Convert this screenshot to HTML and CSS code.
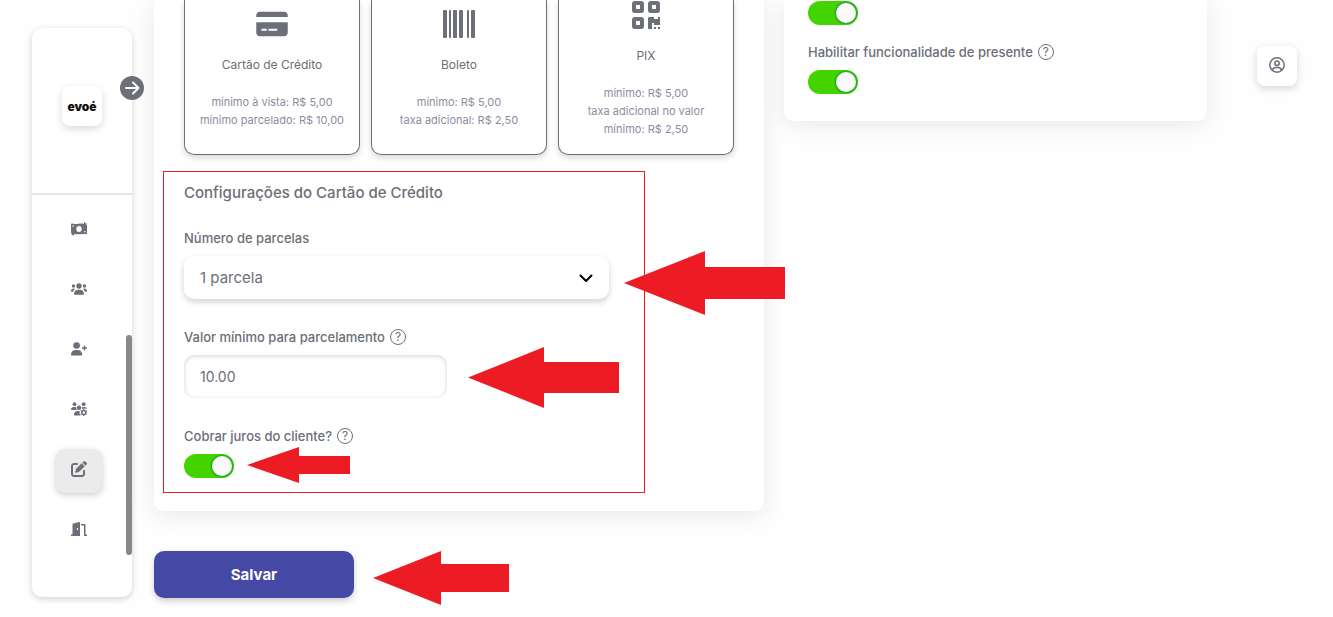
FILE: index.html
```html
<!DOCTYPE html>
<html lang="pt-BR">
<head>
  <meta charset="UTF-8">
  <meta name="viewport" content="width=device-width, initial-scale=1">
  <title>evoé - Configurações</title>
  <link rel="stylesheet" href="styles.css">
</head>
<body>
  <aside class="sidebar">
    <div class="sidebar-top">
      <a class="logo" href="#">evoé</a>
    </div>
    <button class="sidebar-toggle" type="button" aria-label="Expandir menu">
      <svg width="24" height="24" viewBox="0 0 24 24" fill="none" stroke="#fff" stroke-width="2" stroke-linecap="round" stroke-linejoin="round"><path d="M6 12h12M13 6.500l5.500 5.500-5.500 5.500"/></svg>
    </button>
    <nav class="menu">
      <a class="menu-item" href="#" aria-label="Financeiro">
        <svg width="16" height="14" viewBox="0 0 16 14" fill="currentColor">
          <path fill-rule="evenodd" d="M1.500 1.500C4 3 8 1.300 11.500 1.500L16 3V11c0 .8-.6 1.300-1.500 1.200C11 11.500 8 12.500 4.500 12.300L0 11V2.500C0 1.700.7 1.200 1.500 1.500zM8 4a2.700 3 0 1 0 0 6 2.700 3 0 0 0 0-6zM1.500 3.500v1.300c.9 0 1.500-.5 1.500-1.300zM14.500 10.300V9c-.9 0-1.500.5-1.500 1.300z"/>
          <path d="M13 0l3 2-3 2zM3 10l-3 2 3 2z"/>
        </svg>
      </a>
      <a class="menu-item" href="#" aria-label="Usuários">
        <svg width="16" height="12" viewBox="0 0 16 12" fill="currentColor">
          <circle cx="8" cy="3" r="2.700"/><circle cx="2.500" cy="3" r="1.700"/><circle cx="13.500" cy="3" r="1.700"/>
          <path d="M3 11c0-2.600 1.700-4.300 4-4.300h2c2.300 0 4 1.700 4 4.300 0 .5-.3.800-.8.800H3.800c-.5 0-.8-.3-.8-.8zM0 8.200C0 6.500 1 5.500 2.500 5.500c.7 0 1.300.2 1.700.5C3 6.700 2.300 7.700 2.200 8.700H.5c-.3 0-.5-.2-.5-.5zM16 8.200c0-1.700-1-2.700-2.500-2.700-.7 0-1.300.2-1.700.5 1.200.7 1.900 1.700 2 2.700h1.700c.3 0 .5-.2.500-.5z"/>
        </svg>
      </a>
      <a class="menu-item" href="#" aria-label="Adicionar usuário">
        <svg width="16" height="14" viewBox="0 0 16 14" fill="currentColor">
          <circle cx="5.600" cy="3.500" r="3.300"/>
          <path d="M0 12.700C0 9.800 1.900 8 4.500 8h2.200c2.600 0 4.500 1.800 4.500 4.700 0 .5-.3.900-.8.900H.8c-.5 0-.8-.4-.8-.9zM12.800 3.500h1.400v1.800H16v1.400h-1.800v1.800h-1.400V6.700H11V5.300h1.800z"/>
        </svg>
      </a>
      <a class="menu-item" href="#" aria-label="Gerenciar equipe">
        <svg width="16" height="14" viewBox="0 0 16 14" fill="currentColor">
          <circle cx="3.500" cy="2.200" r="1.900"/><circle cx="12.700" cy="2.200" r="1.900"/><circle cx="8" cy="5.700" r="2.200"/>
          <path d="M0 7.500C0 5.900 1.100 5 2.500 5h1.200c.6 0 1.100.1 1.500.4C5 6.300 5.300 7.200 6 8H.5c-.3 0-.5-.2-.5-.5zM10.900 5.300c.4-.2.900-.3 1.400-.3h1.200C15 5 16 5.800 16 7l-2-.6-3 .6c.1-.6.100-1.200-.1-1.700zM3 12.800C3 10.400 4.600 9 6.700 9h2c-.4 1.700-.1 3.500 1.100 4.500H3.600c-.3 0-.6-.3-.6-.7z"/>
          <circle cx="12.800" cy="10.500" r="2" fill="none" stroke="currentColor" stroke-width="1.500"/>
          <path d="M12.200 7h1.200v1.500h-1.200zM12.200 12.500h1.200V14h-1.200zM9.400 9.100l.6-1 1.300.8-.6 1zM14.900 12.100l.6-1 1.200.8-.6 1zM9.400 12l1.300-.8.6 1L10 13zM14.900 9l1.300-.8.6 1-1.300.8z"/>
        </svg>
      </a>
      <a class="menu-item active" href="#" aria-label="Editar evento">
        <svg width="16" height="16" viewBox="0 0 512 512" fill="currentColor">
          <path d="M472 22c-23-23-60-23-83 0l-28 28 101 101 28-28c23-23 23-60 0-83zM340 71L180 231c-7 7-12 15-14 24l-30 88c-3 9-1 18 6 25s16 9 25 6l88-30c9-3 17-8 24-14l160-160z"/>
          <path d="M96 64C43 64 0 107 0 160v256c0 53 43 96 96 96h256c53 0 96-43 96-96v-96c0-18-14-32-32-32s-32 14-32 32v96c0 18-14 32-32 32H96c-18 0-32-14-32-32V160c0-18 14-32 32-32h96c18 0 32-14 32-32s-14-32-32-32z"/>
        </svg>
      </a>
      <a class="menu-item" href="#" aria-label="Sair">
        <svg width="16" height="14" viewBox="0 0 16 14" fill="currentColor">
          <path fill-rule="evenodd" d="M8 0c.6 0 1 .4 1 1v13H0v-1.500h1.500V2.500c0-.5.300-.9.800-1zM6.500 6c-.4 0-.7.500-.7 1s.3 1 .7 1 .7-.5.700-1-.3-1-.7-1z"/>
          <path d="M10 2h3.500c.6 0 1 .4 1 1v9.500H16V14h-3V3.500h-3z"/>
        </svg>
      </a>
    </nav>
    <div class="scroll-thumb"></div>
  </aside>

  <main class="content">
    <form class="columns">
      <div class="column">
        <section class="card payment-card">
          <div class="methods">
            <div class="method">
              <span class="method-icon">
                <svg width="32" height="28" viewBox="0 0 576 512" fill="currentColor"><path d="M64 32C28.700 32 0 60.700 0 96v32h576V96c0-35.300-28.700-64-64-64H64zM576 224H0v192c0 35.300 28.700 64 64 64h448c35.300 0 64-28.700 64-64V224zM96 342h96v36H96zM224 342h160v36H224z"/></svg>
              </span>
              <h3>Cartão de Crédito</h3>
              <p>mínimo à vista: R$ 5,00<br>mínimo parcelado: R$ 10,00</p>
            </div>
            <div class="method">
              <span class="method-icon">
                <svg width="32" height="28" viewBox="0 0 32 28" fill="currentColor"><rect width="4" height="28" rx="1"/><rect x="6" width="2" height="28" rx="1"/><rect x="10" width="4" height="28" rx="1"/><rect x="16" width="4" height="28" rx="1"/><rect x="24" width="2" height="28" rx="1"/><rect x="28" width="4" height="28" rx="1"/></svg>
              </span>
              <h3>Boleto</h3>
              <p>mínimo: R$ 5,00<br>taxa adicional: R$ 2,50</p>
            </div>
            <div class="method">
              <span class="method-icon">
                <svg width="28" height="28" viewBox="0 0 28 28" fill="currentColor">
                  <path fill-rule="evenodd" d="M3 0h6a3 3 0 0 1 3 3v6a3 3 0 0 1-3 3H3a3 3 0 0 1-3-3V3a3 3 0 0 1 3-3zm1 4v4h4V4zM19 0h6a3 3 0 0 1 3 3v6a3 3 0 0 1-3 3h-6a3 3 0 0 1-3-3V3a3 3 0 0 1 3-3zm1 4v4h4V4zM3 16h6a3 3 0 0 1 3 3v6a3 3 0 0 1-3 3H3a3 3 0 0 1-3-3v-6a3 3 0 0 1 3-3zm1 4v4h4v-4z"/>
                  <path d="M17 16h5v2h4v-2h2v8h-6v-2h-2v6h-4V17zM22 26h2v2h-2zM26 26h2v2h-2z"/>
                </svg>
              </span>
              <h3>PIX</h3>
              <p>mínimo: R$ 5,00<br>taxa adicional no valor<br>mínimo: R$ 2,50</p>
            </div>
          </div>

          <div class="credit-settings">
            <h2>Configurações do Cartão de Crédito</h2>
            <div class="field">
              <label for="parcelas">Número de parcelas</label>
              <div class="control">
                <select id="parcelas" name="parcelas">
                  <option selected>1 parcela</option>
                  <option>2 parcelas</option>
                  <option>3 parcelas</option>
                </select>
                <svg class="chevron" width="14" height="9" viewBox="0 0 14 9" fill="none" stroke="#000" stroke-width="2" stroke-linecap="round" stroke-linejoin="round"><path d="M1.500 1.500L7 7l5.500-5.500"/></svg>
                <svg class="arrow arrow-select" width="161" height="64" viewBox="0 0 161 64"><path d="M0 32L81 0v16h80v32H81v16z"/></svg>
              </div>
            </div>
            <div class="field">
              <div class="label-row">
                <label for="minimo">Valor mínimo para parcelamento</label>
                <span class="help">?</span>
              </div>
              <div class="control control-short">
                <input class="text-input" type="text" id="minimo" name="minimo" value="10.00">
                <svg class="arrow arrow-input" width="151" height="61" viewBox="0 0 151 61"><path d="M0 30.500L76 0v15h75v31H76v15z"/></svg>
              </div>
            </div>
            <div class="field">
              <div class="label-row">
                <label for="juros">Cobrar juros do cliente?</label>
                <span class="help">?</span>
              </div>
              <div class="control control-switch">
                <input class="switch" type="checkbox" id="juros" name="juros" checked>
                <svg class="arrow arrow-switch" width="103" height="36" viewBox="0 0 103 36"><path d="M0 18L52 0v9h51v18H52v9z"/></svg>
              </div>
            </div>
          </div>
        </section>

        <div class="control control-save">
          <button class="save" type="submit">Salvar</button>
          <svg class="arrow arrow-save" width="136" height="54" viewBox="0 0 136 54"><path d="M0 27L68 0v13h68v28H68v13z"/></svg>
        </div>
      </div>

      <section class="card options-card">
        <input class="switch" type="checkbox" name="opcao" aria-label="Opção" checked>
        <div class="field">
          <div class="label-row">
            <label for="presente">Habilitar funcionalidade de presente</label>
            <span class="help">?</span>
          </div>
          <input class="switch" type="checkbox" id="presente" name="presente" checked>
        </div>
      </section>
    </form>
  </main>

  <button class="profile" type="button" aria-label="Perfil">
    <svg width="16" height="16" viewBox="0 0 16 16" fill="none" stroke="currentColor" stroke-width="1.500"><circle cx="8" cy="8" r="7.200"/><circle cx="8" cy="6.200" r="2.200"/><path d="M3.500 13.200c.5-2 1.900-2.700 3.500-2.700h2c1.600 0 3 .7 3.500 2.700"/></svg>
  </button>
</body>
</html>
```
FILE: styles.css
```css
* {
  box-sizing: border-box;
}

body {
  display: flex;
  align-items: flex-start;
  min-height: 100vh;
  margin: 0;
  padding: 0 36px 0 32px;
  background-color: #fefefe;
  color: #6c6e78;
  font-family: Inter, "Liberation Sans", sans-serif;
  font-size: 13px;
}

h2, h3, p {
  margin: 0;
}

button, input, select {
  margin: 0;
  border: none;
  font-family: inherit;
  color: inherit;
}

button {
  padding: 0;
  cursor: pointer;
}

/* sidebar */
.sidebar {
  position: relative;
  flex: none;
  width: 100px;
  height: calc(100vh - 48px);
  margin-top: 28px;
  border-radius: 10px;
  background-color: #fff;
  box-shadow: 0 2px 6px rgba(0, 0, 0, 0.18);
}

.sidebar-top {
  display: flex;
  justify-content: center;
  padding: 58px 0 67px;
  border-bottom: 2px solid #e5e5e5;
}

.logo {
  display: flex;
  align-items: center;
  justify-content: center;
  width: 40px;
  height: 40px;
  border-radius: 8px;
  box-shadow: 0 3px 8px rgba(0, 0, 0, 0.15);
  color: #111;
  font-size: 12px;
  font-weight: 900;
  text-decoration: none;
}

.sidebar-toggle {
  position: absolute;
  top: 48px;
  right: -12px;
  width: 24px;
  height: 24px;
  border-radius: 50%;
  background-color: #6c6e78;
}

.menu {
  display: flex;
  flex-direction: column;
  align-items: center;
  gap: 16px;
  padding: 12px 6px 0 0;
}

.menu-item {
  display: flex;
  align-items: center;
  justify-content: center;
  width: 46px;
  height: 44px;
  border-radius: 10px;
  color: #6c6e78;
}

.menu-item.active {
  height: 48px;
  margin-bottom: -4px;
  padding-bottom: 4px;
  border-top: 2px solid transparent;
  border-bottom: 2px solid transparent;
  background-color: #ebebeb;
  background-clip: padding-box;
  filter: drop-shadow(0 2px 3px rgba(0, 0, 0, 0.2));
}

.scroll-thumb {
  position: absolute;
  right: 0;
  bottom: 42px;
  width: 6px;
  height: 220px;
  border-radius: 3px;
  background-color: #888;
}

/* content */
.content {
  flex: 1;
  margin: 0 50px 0 22px;
}

.columns {
  display: grid;
  grid-template-columns: 610fr 423fr;
  align-items: start;
  gap: 20px;
}

.card {
  border-radius: 0 0 10px 10px;
  background-color: #fff;
  box-shadow: 0 4px 24px rgba(0, 0, 0, 0.09);
}

.payment-card {
  padding: 0 30px 18px 9px;
}

.options-card {
  padding: 1px 24px 27px;
}

.options-card .field {
  margin-top: 15px;
}

.methods {
  display: grid;
  grid-template-columns: repeat(3, 1fr);
  gap: 11px;
  margin-left: 21px;
}

.method {
  display: flex;
  flex-direction: column;
  align-items: center;
  justify-content: center;
  height: 155px;
  padding-bottom: 20px;
  border: 1px solid #6c6e78;
  border-top: none;
  border-radius: 0 0 10px 10px;
  box-shadow: 0 3px 6px rgba(0, 0, 0, 0.15);
  text-align: center;
  line-height: 18px;
  white-space: nowrap;
}

.method-icon {
  display: flex;
  flex: none;
  align-items: center;
  height: 36px;
  margin-bottom: 14px;
}

.method h3 {
  margin-bottom: 19px;
  font-size: 12px;
  font-weight: 400;
}

.method p {
  color: #8c8c9e;
  font-size: 11px;
}

.credit-settings {
  max-width: 482px;
  margin-top: 16px;
  padding: 11px 35px 14px 20px;
  border: 1px solid #ed1c24;
}

.credit-settings h2 {
  margin-bottom: 23px;
  font-size: 15px;
  font-weight: 500;
  line-height: 20px;
}

.field + .field {
  margin-top: 26px;
}

.field label {
  display: block;
  font-weight: 500;
  line-height: 24px;
}

.label-row {
  display: flex;
  align-items: center;
  gap: 5px;
}

.help {
  width: 16px;
  height: 16px;
  border: 1px solid #6c6e78;
  border-radius: 50%;
  font-size: 12px;
  line-height: 14px;
  text-align: center;
}

.control {
  position: relative;
  margin-top: 6px;
}

.control-short {
  max-width: 263px;
}

.control-switch {
  width: 50px;
}

.control-save {
  width: 200px;
  margin-top: 40px;
}

select, .text-input {
  display: block;
  width: 100%;
  height: 43px;
  padding: 0 16px;
  border-radius: 10px;
  background-color: #fff;
}

select {
  appearance: none;
  box-shadow: 0 3px 6px rgba(0, 0, 0, 0.18);
  font-size: 15px;
}

.text-input {
  box-shadow: inset 0 1px 4px rgba(0, 0, 0, 0.18);
  font-size: 14px;
}

.chevron {
  position: absolute;
  top: 18px;
  right: 16px;
  pointer-events: none;
}

.switch {
  display: flex;
  align-items: center;
  justify-content: flex-end;
  appearance: none;
  width: 50px;
  height: 24px;
  padding-right: 2px;
  border-radius: 12px;
  background-color: #43d400;
  cursor: pointer;
}

.switch::before {
  content: "";
  width: 20px;
  height: 20px;
  border-radius: 50%;
  background-color: #fafafa;
  box-shadow: 0 0 2px 1px #1f9a2a;
}

.switch:not(:checked) {
  justify-content: flex-start;
  padding-left: 2px;
  background-color: #ccc;
}

.options-card .field .switch {
  margin-top: 6px;
}

.save {
  display: block;
  width: 100%;
  height: 47px;
  border-radius: 10px;
  background-color: #4549a5;
  box-shadow: 0 3px 6px rgba(0, 0, 0, 0.2);
  color: #fff;
  font-size: 15px;
  font-weight: 700;
}

/* red arrows pointing at the fields */
.arrow {
  position: absolute;
  left: 100%;
  z-index: 1;
  fill: #ed1c24;
  pointer-events: none;
}

.arrow-select {
  top: -5px;
  margin-left: 15px;
}

.arrow-input {
  top: -8px;
  margin-left: 21px;
}

.arrow-switch {
  top: -7px;
  margin-left: 13px;
}

.arrow-save {
  top: 0;
  margin-left: 19px;
}

.profile {
  display: flex;
  align-items: center;
  justify-content: center;
  flex: none;
  width: 40px;
  height: 40px;
  margin-top: 46px;
  padding-bottom: 2px;
  border-radius: 8px;
  background-color: #fff;
  box-shadow: 0 3px 8px rgba(0, 0, 0, 0.15);
}
```
